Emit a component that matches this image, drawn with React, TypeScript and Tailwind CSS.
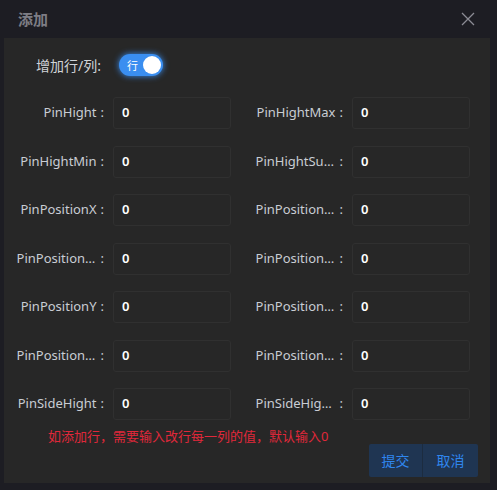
import React from "react";

const fields: [string, string][] = [
  ["PinHight", "PinHightMax"],
  ["PinHightMin", "PinHightSubtract"],
  ["PinPositionX", "PinPositionXMax"],
  ["PinPositionXMin", "PinPositionXSubtract"],
  ["PinPositionY", "PinPositionYMax"],
  ["PinPositionYMin", "PinPositionYSubtract"],
  ["PinSideHight", "PinSideHightMax"],
];

const Field = ({ label }: { label: string }) => (
  <div className="flex items-center h-8">
    <div className="w-[92px] flex justify-end items-center text-[13px] text-[#c9cdd4]">
      <span className="truncate max-w-[80px]">{label}</span>
      <span className="ml-[4px] mr-[2px]">:</span>
    </div>
    <div className="ml-[7px] w-[118px] h-8 border border-[#303030] rounded-[3px] bg-[#272727] flex items-center px-[8px] text-[13px] font-semibold text-white">
      0
    </div>
  </div>
);

export default function App() {
  return (
    <div
      className="w-[497px] h-[490px] bg-[#1d1d23] flex flex-col"
      style={{ fontFamily: '"Noto Sans", "Noto Sans CJK SC", sans-serif' }}
    >
      <div className="h-[38px] flex items-center justify-between pl-[18px] pr-[22px] shrink-0">
        <span className="text-[15px] font-bold text-[#7d7d85]">添加</span>
        <svg width="14" height="14" viewBox="0 0 14 14" className="text-[#8c8c94]">
          <path d="M1 1L13 13M13 1L1 13" stroke="currentColor" strokeWidth="1.3" />
        </svg>
      </div>
      <div className="mx-[4px] w-[486px] h-[445px] bg-[#272727] flex flex-col">
        <div className="flex items-center h-[40px] mt-[7px] pl-[32px]">
          <span className="text-[14px] text-[#d0d3d8]">增加行/列:</span>
          <div className="ml-[18px] w-[44px] h-[22px] rounded-full bg-[#3a8ef0] shadow-[0_0_6px_#3a8ef0] flex items-center justify-between pl-[8px] pr-[2px]">
            <span className="text-[11px] text-white leading-none">行</span>
            <span className="w-[18px] h-[18px] rounded-full bg-white" />
          </div>
        </div>
        <div className="grid grid-cols-[217px_217px] gap-x-[22px] gap-y-[16.5px] mt-[12px] pl-[10px]">
          {fields.map(([a, b]) => (
            <React.Fragment key={a}>
              <Field label={a} />
              <Field label={b} />
            </React.Fragment>
          ))}
        </div>
        <div className="pl-[44px] mt-[6px] text-[13px] text-[#e0283a] leading-[20px]">
          如添加行，需要输入改行每一列的值，默认输入0
        </div>
        <div className="flex justify-end pr-[12px] -mt-[2px]">
          <div className="flex h-[33px] bg-[#1f3552] rounded-[2px]">
            <button className="w-[54px] text-[14px] text-[#2f86ee] border-r border-[#1c2c40]">提交</button>
            <button className="w-[55px] text-[14px] text-[#2f86ee]">取消</button>
          </div>
        </div>
      </div>
    </div>
  );
}
